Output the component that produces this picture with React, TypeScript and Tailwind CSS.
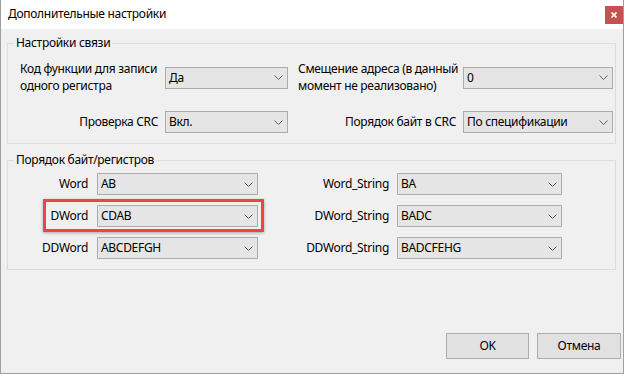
import type React from "react"

const Chevron = () => (
  <svg width="9" height="5" viewBox="0 0 9 5" className="shrink-0">
    <path d="M0.5 0.5 L4.5 4.5 L8.5 0.5" fill="none" stroke="#606060" strokeWidth="1" />
  </svg>
)

function Combo({ value, width }: { value: string; width: string }) {
  return (
    <div
      className={`${width} h-[22px] shrink-0 flex items-center justify-between border border-[#acacac] bg-[#e5e5e5] pl-[3px] pr-[4px]`}
    >
      <span className="whitespace-nowrap">{value}</span>
      <Chevron />
    </div>
  )
}

function Group({ title, children, className }: { title: string; children: React.ReactNode; className?: string }) {
  return (
    <div className={`w-[609px] border border-[#dcdcdc] ${className ?? ""}`}>
      <div className="-mt-[9px] ml-[6px] w-fit bg-[#f0f0f0] px-[2px] leading-[16px]">{title}</div>
      {children}
    </div>
  )
}

const orderRows = [
  { left: "Word", leftValue: "AB", right: "Word_String", rightValue: "BA" },
  { left: "DWord", leftValue: "CDAB", right: "DWord_String", rightValue: "BADC", marked: true },
  { left: "DDWord", leftValue: "ABCDEFGH", right: "DDWord_String", rightValue: "BADCFEHG" },
]

export default function App() {
  return (
    <div className="w-[624px] h-[374px] flex flex-col border border-t-0 border-[#9f9f9f] bg-[#f0f0f0] text-[12px] tracking-[-0.3px] text-black font-['Noto_Sans',sans-serif]">
      {/* title bar */}
      <div className="h-[29px] shrink-0 flex justify-between bg-white">
        <span className="self-center pl-[7px] pb-[1px]">Дополнительные настройки</span>
        <button className="mt-[6px] w-[18px] h-[18px] flex items-center justify-center bg-[#c75050]">
          <svg width="6" height="6" viewBox="0 0 6 6">
            <path d="M0.5 0.5 L5.5 5.5 M5.5 0.5 L0.5 5.5" stroke="#fff" strokeWidth="1.7" />
          </svg>
        </button>
      </div>

      <div className="flex flex-col pl-[6px]">
        <Group title="Настройки связи" className="mt-[14px]">
          <div className="mt-[10px] pl-[12px] pb-[10px] flex flex-col gap-[17px]">
            <div className="flex items-center">
              <div className="w-[138px] leading-[16.5px] whitespace-nowrap">
                Код функции для записи
                <br />
                одного регистра
              </div>
              <div className="ml-[7px]">
                <Combo value="Да" width="w-[123px]" />
              </div>
              <div className="ml-[10px] w-[158px] leading-[16.5px] whitespace-nowrap">
                Смещение адреса (в данный
                <br />
                момент не реализовано)
              </div>
              <div className="ml-[7px]">
                <Combo value="0" width="w-[150px]" />
              </div>
            </div>
            <div className="flex items-center">
              <div className="w-[138px] text-right whitespace-nowrap">Проверка CRC</div>
              <div className="ml-[7px]">
                <Combo value="Вкл." width="w-[123px]" />
              </div>
              <div className="ml-[10px] w-[158px] text-right whitespace-nowrap">Порядок байт в CRC</div>
              <div className="ml-[7px]">
                <Combo value="По спецификации" width="w-[150px]" />
              </div>
            </div>
          </div>
        </Group>

        <Group title="Порядок байт/регистров" className="mt-[16px]">
          <div className="mt-[5px] pl-[12px] pb-[10px] flex flex-col gap-[10px]">
            {orderRows.map((r) => (
              <div key={r.left} className="flex items-center">
                <div className="relative flex items-center gap-[9px]">
                  <div className="w-[68px] text-right whitespace-nowrap">{r.left}</div>
                  <Combo value={r.leftValue} width="w-[161px]" />
                  {r.marked && (
                    <div className="absolute left-[23px] -right-[6px] -top-[6px] -bottom-[5px] border-[3px] border-[#ee4349] shadow-[0_1px_3px_rgba(0,0,0,0.3)]" />
                  )}
                </div>
                <div className="w-[131px] text-right whitespace-nowrap">{r.right}</div>
                <div className="ml-[8px]">
                  <Combo value={r.rightValue} width="w-[165px]" />
                </div>
              </div>
            ))}
          </div>
        </Group>
      </div>

      <div className="mt-[63px] pr-[2px] flex justify-end gap-[8px]">
        <button className="w-[83px] h-[26px] border border-[#adadad] bg-[#e1e1e1]">OK</button>
        <button className="w-[84px] h-[26px] border border-[#adadad] bg-[#e1e1e1]">Отмена</button>
      </div>
    </div>
  )
}
